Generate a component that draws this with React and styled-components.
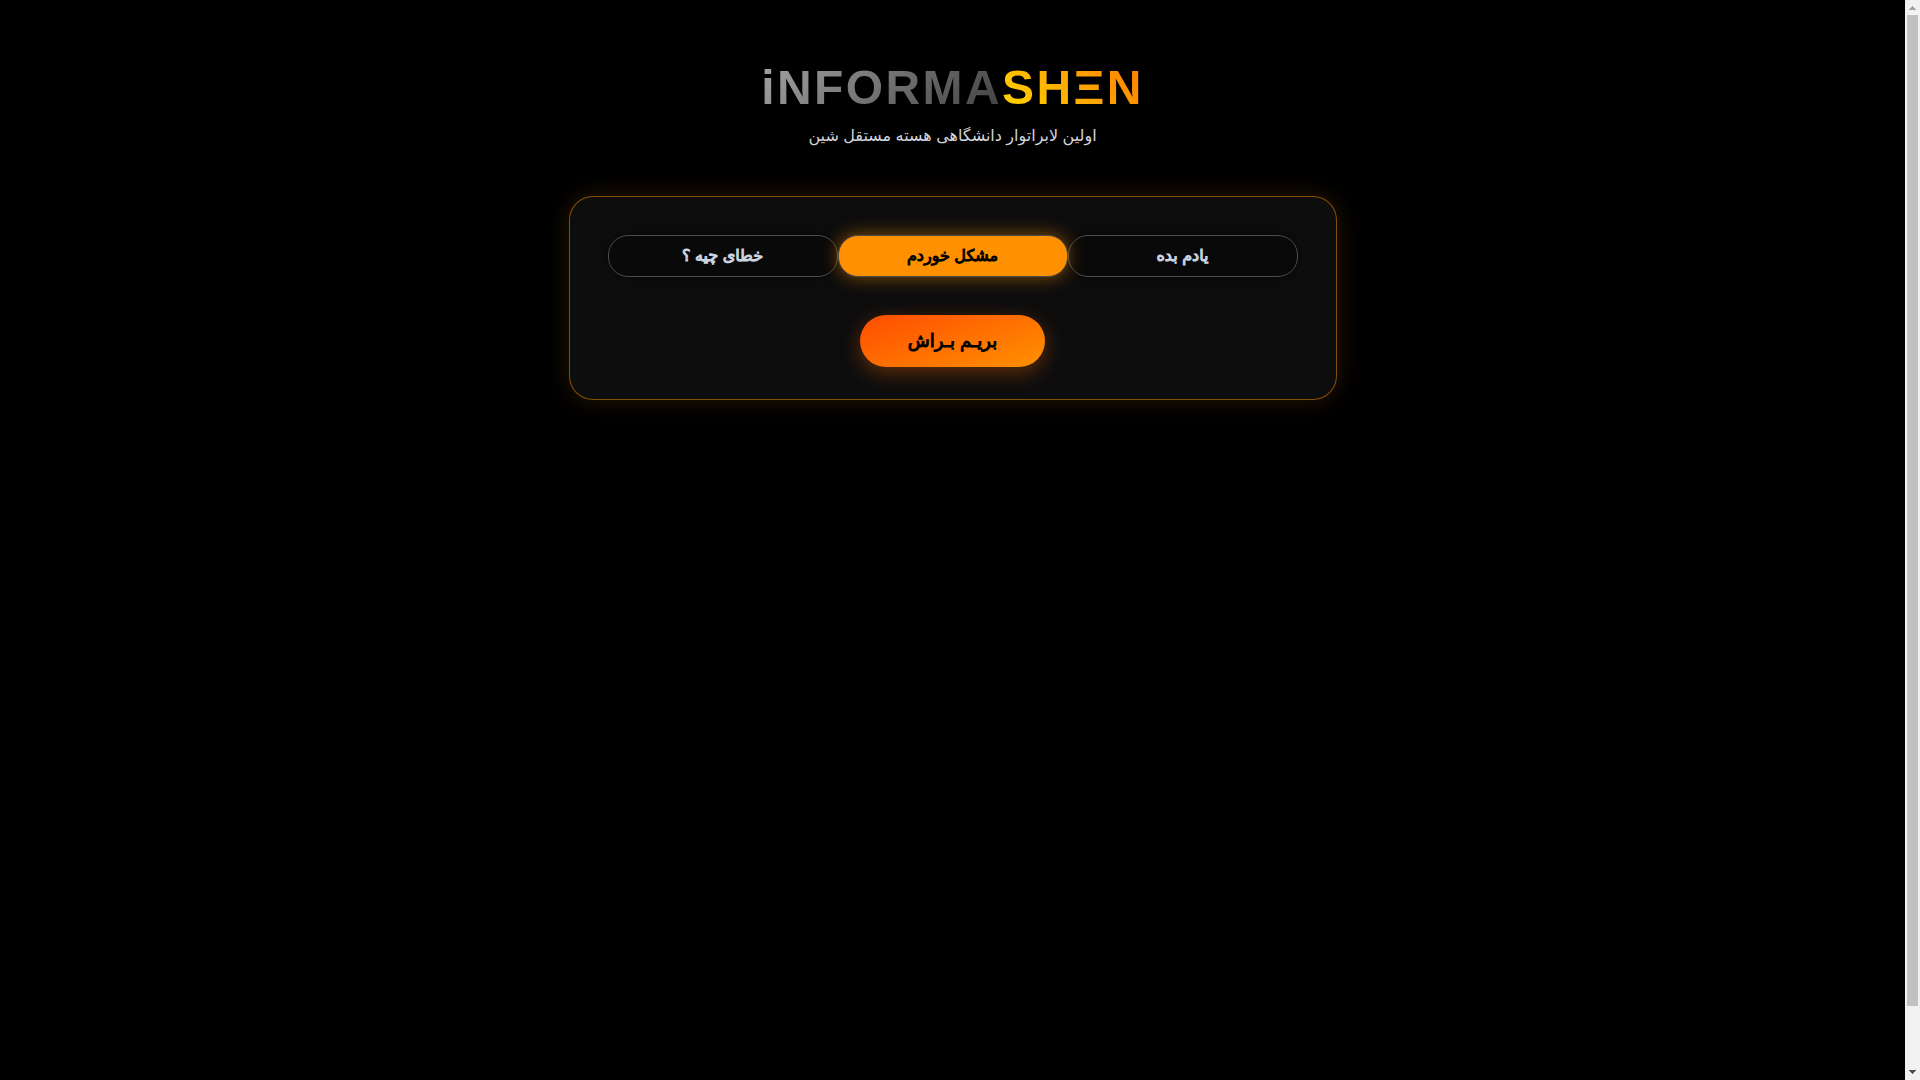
import React, { useState } from "react";
import styled, { createGlobalStyle } from "styled-components";

const GlobalStyle = createGlobalStyle`
  body {
    margin: 0;
    background: #000;
    color: #d1d5db;
    font-family: "Liberation Sans", "DejaVu Sans", sans-serif;
  }
`;

const Shell = styled.div`
  height: 100vh;
  display: flex;
  overflow: hidden;
`;

const Page = styled.main`
  flex: 1;
  min-width: 0;
  padding: 56px 16px 32px;
  display: flex;
  flex-direction: column;
  align-items: center;
  gap: 50px;
`;

const Header = styled.header`
  text-align: center;
`;

const Title = styled.h1`
  margin: 0 0 6px;
  font-size: 48px;
  line-height: 64px;
  font-weight: 700;
  letter-spacing: 0.05em;
`;

const TitlePart = styled.span`
  background: linear-gradient(${(p) => p.$angle}, ${(p) => p.$from}, ${(p) => p.$to});
  background-clip: text;
  -webkit-background-clip: text;
  color: transparent;
`;

const Subtitle = styled.p`
  margin: 0;
  font-size: 16px;
  line-height: 20px;
`;

const Card = styled.section`
  box-sizing: border-box;
  width: 100%;
  max-width: 768px;
  padding: 38px 38px 32px;
  display: flex;
  flex-direction: column;
  align-items: center;
  gap: 38px;
  border: 1px solid rgba(255, 145, 0, 0.5);
  border-radius: 24px;
  background: #0d0d0d;
  box-shadow: 0 0 24px rgba(255, 145, 0, 0.15);
`;

const Tabs = styled.div`
  align-self: stretch;
  display: flex;
`;

const Tab = styled.button`
  flex: 1;
  z-index: ${(p) => (p.$active ? 1 : 0)};
  height: 42px;
  padding: 0 16px 2px;
  border: 1px solid #4b4b4b;
  border-radius: 20px;
  background: ${(p) => (p.$active ? "#ff9100" : "#090909")};
  color: ${(p) => (p.$active ? "#000" : "#cbd5e1")};
  box-shadow: ${(p) =>
    p.$active ? "0 0 18px rgba(255, 145, 0, 0.5)" : "0 0 10px rgba(0, 0, 0, 0.5)"};
  font: inherit;
  font-size: 16px;
  -webkit-text-stroke: 1px currentColor;
  cursor: pointer;
`;

const GoButton = styled.button`
  height: 52px;
  padding: 0 48px;
  border: 0;
  border-radius: 26px;
  background: linear-gradient(160deg, #ff4d00, #ff9100);
  color: #000;
  box-shadow: 0 6px 20px rgba(255, 110, 0, 0.35);
  font: inherit;
  font-size: 18px;
  -webkit-text-stroke: 1px currentColor;
  cursor: pointer;
`;

const ScrollTrack = styled.div`
  width: 15px;
  flex: none;
  display: flex;
  flex-direction: column;
  align-items: center;
  background: #f1f1f1;
`;

const ScrollArrow = styled.svg`
  display: block;
  width: 15px;
  height: 15px;
  flex: none;
  fill: ${(p) => p.$color};
`;

const ScrollThumb = styled.div`
  width: 11px;
  flex: 991;
  background: #c1c1c1;
`;

const ScrollRest = styled.div`
  flex: 59;
`;

const MODES = ["یادم بده", "مشکل خوردم", "خطای چیه ؟"];

export default function App() {
  const [mode, setMode] = useState(1);
  return (
    <>
      <GlobalStyle />
      <Shell>
        <Page>
          <Header>
            <Title>
              <TitlePart $angle="135deg" $from="#a3a3a3" $to="#404040">iNFORMA</TitlePart>
              <TitlePart $angle="45deg" $from="#ffd700" $to="#ff7b00">SHΞN</TitlePart>
            </Title>
            <Subtitle dir="rtl">اولین لابراتوار دانشگاهی هسته مستقل شین</Subtitle>
          </Header>
          <Card dir="rtl">
            <Tabs>
              {MODES.map((label, i) => (
                <Tab
                  key={label}
                  type="button"
                  aria-pressed={mode === i}
                  $active={mode === i}
                  onClick={() => setMode(i)}
                >
                  {label}
                </Tab>
              ))}
            </Tabs>
            <GoButton type="button">بریـم بـراش</GoButton>
          </Card>
        </Page>
        <ScrollTrack aria-hidden="true">
          <ScrollArrow $color="#a3a3a3" viewBox="0 0 15 15">
            <path d="M4 10h7v-1h-1v-1h-1v-1h-1v-1h-1v1h-1v1h-1v1h-1z" />
          </ScrollArrow>
          <ScrollThumb />
          <ScrollRest />
          <ScrollArrow $color="#505050" viewBox="0 0 15 15">
            <path d="M4 5h7v1h-1v1h-1v1h-1v1h-1v-1h-1v-1h-1v-1h-1z" />
          </ScrollArrow>
        </ScrollTrack>
      </Shell>
    </>
  );
}
